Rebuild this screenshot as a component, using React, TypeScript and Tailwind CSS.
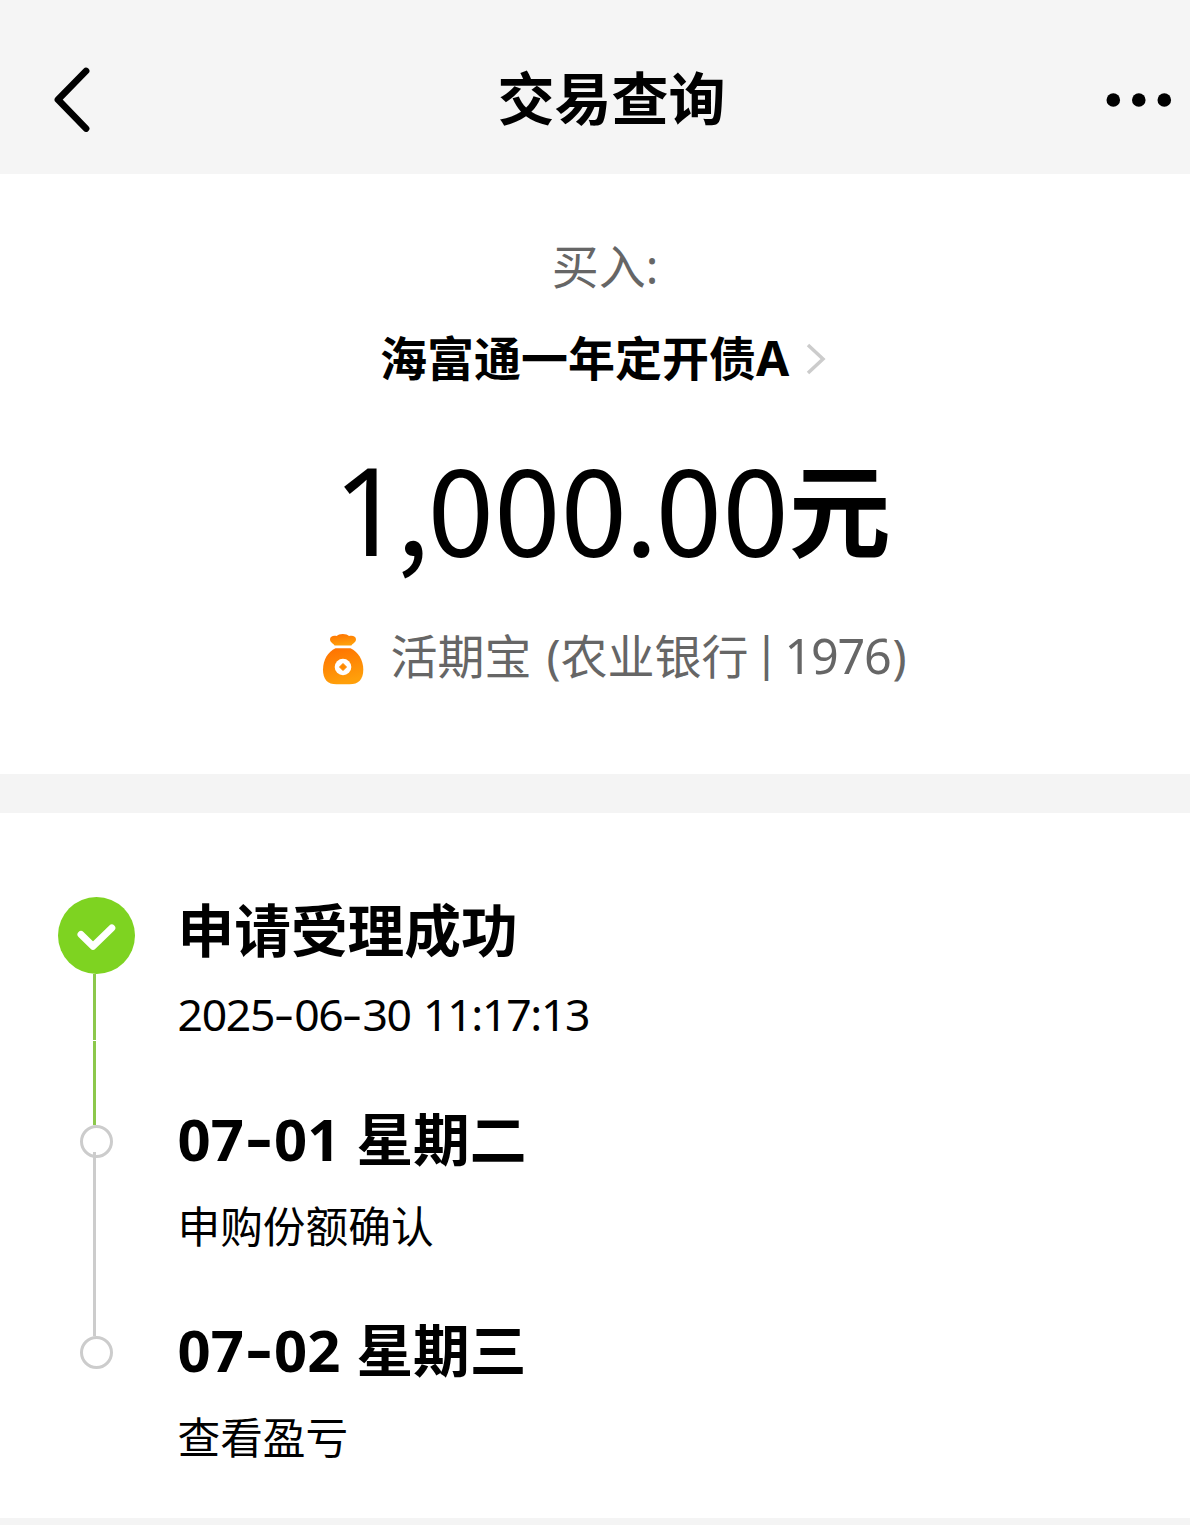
import { clsx } from 'clsx'
import { Fragment, type ReactNode } from 'react'

interface Step {
  date?: string
  title: string
  note?: string
  time?: string
  height: string
}

const STEPS: Step[] = [
  { title: '申请受理成功', time: '2025-06-30 11:17:13', height: 'h-[209px]' },
  { date: '07-01', title: '星期二', note: '申购份额确认', height: 'h-[211px]' },
  { date: '07-02', title: '星期三', note: '查看盈亏', height: 'h-[211px]' },
]

// Latin glyphs sit on the baseline of the surrounding Chinese line
function Latin({ className, children }: { className?: string; children: ReactNode }) {
  return <span className={clsx("font-['Noto_Sans',sans-serif] leading-none", className)}>{children}</span>
}

// Dates use a wider, slightly raised hyphen
function Dashed({ text, dash }: { text: string; dash: string }) {
  return text.split('-').map((part, i) => (
    <Fragment key={i}>
      {i > 0 && <span className={clsx('inline-block -translate-y-[0.03em] scale-x-140 text-center tracking-normal', dash)}>-</span>}
      {part}
    </Fragment>
  ))
}

function BackIcon() {
  return (
    <svg width="36" height="66" viewBox="0 0 36 66" fill="none" className="shrink-0">
      <path d="M32 4L4 32.7L32 61.5" stroke="#000" strokeWidth="6.8" strokeLinecap="round" strokeLinejoin="round" />
    </svg>
  )
}

function MoreIcon() {
  return (
    <svg width="66" height="14" viewBox="0 0 66 14" className="shrink-0">
      <circle cx="7.3" cy="7" r="6.8" />
      <circle cx="32.8" cy="7" r="6.8" />
      <circle cx="58.3" cy="7" r="6.8" />
    </svg>
  )
}

function MoneyBag() {
  return (
    <svg width="42" height="52" viewBox="0 0 42 52" className="mt-[9px] shrink-0">
      <defs>
        <linearGradient id="bag" x1="0" y1="0" x2="0.3" y2="1">
          <stop offset="0" stopColor="#ff6f00" />
          <stop offset="1" stopColor="#ff9f0a" />
        </linearGradient>
      </defs>
      <path
        fill="url(#bag)"
        d="M12.6 12.6C12 10.8 8 9.6 8 6.2C8 3.2 11.5 2 14.8 3C16.5 0.2 25 0.2 27 3C30.5 2 34 3.2 34 6.2C34 9.6 30 10.8 29.4 12.6Z"
      />
      <path
        fill="url(#bag)"
        d="M13.5 15.2H28.5C36 18.5 41.3 27 41.3 36.5C41.3 46.5 36.5 51.3 27.5 51.3H14.5C5.5 51.3 1 46.5 1 36.5C1 27 6 18.5 13.5 15.2Z"
      />
      <circle cx="21" cy="34" r="8.3" fill="#fff" />
      <path d="M21 30.5L24.5 34L21 37.5L17.5 34Z" fill="#ff8a00" stroke="#ff8a00" strokeLinejoin="round" />
    </svg>
  )
}

function CheckBadge() {
  return (
    <svg width="77" height="77" viewBox="0 0 77 77" fill="none" className="shrink-0">
      <circle cx="38.5" cy="38.5" r="38.5" fill="#7ed321" />
      <path d="M23 37.5L35 49.3L53.8 31" stroke="#fff" strokeWidth="7" strokeLinecap="round" strokeLinejoin="round" />
    </svg>
  )
}

function Rail() {
  return (
    <div className="flex w-[77px] shrink-0 flex-col">
      <CheckBadge />
      <div className="ml-[35px] h-[66px] w-[3px] bg-[#8cc84b]" />
      <div className="ml-[35px] mt-px h-[84px] w-[3px] bg-[#8cc84b]" />
      <div className="ml-[22px] size-[33px] rounded-full border-3 border-[#ccc]" />
      <div className="-mt-[6px] ml-[35px] h-[184px] w-[3px] bg-[#ccc]" />
      <div className="ml-[22px] size-[33px] rounded-full border-3 border-[#ccc]" />
    </div>
  )
}

export default function App() {
  return (
    <div className="flex h-[1525px] w-[1190px] flex-col overflow-hidden bg-[#f4f4f4] font-['Noto_Sans_CJK_SC',sans-serif] whitespace-nowrap text-black">
      <header className="flex h-[174px] items-center bg-[#f5f5f5] pt-[26px] pr-[18px] pl-[54px]">
        <BackIcon />
        <h1 className="-mt-[11px] flex-1 pl-[27px] text-center text-[57px] leading-[60px] font-bold">交易查询</h1>
        <MoreIcon />
      </header>

      <section className="flex h-[600px] flex-col items-center bg-white pt-[60px]">
        <p className="pl-[20px] text-[47px] leading-[60px] text-[#666]">
          买入<Latin>:</Latin>
        </p>
        <div className="mt-[32px] flex h-[60px] items-center pl-[16px]">
          <span className="text-[47px] leading-[60px] font-bold">
            海富通一年定开债<Latin className="text-[48px]">A</Latin>
          </span>
          <svg width="20" height="32" viewBox="0 0 20 32" fill="none" className="mt-[6px] ml-[17px]">
            <path d="M2 2L17 16L2 30" stroke="#ccc" strokeWidth="3.5" />
          </svg>
        </div>
        <div className="mt-[48px] flex h-[140px] items-center pl-[34px]">
          <span className="text-[120px] leading-[140px]">
            <Latin className="text-[122px] tracking-[-7px]">1</Latin>
            <span className="-mr-[2px]">,</span>
            000
            <span className="-mx-[2.5px]">.</span>
            00
          </span>
          <span className="pt-[4px] text-[102px] leading-[140px] font-bold">元</span>
        </div>
        <div className="mt-[50px] flex h-[60px] items-center pl-[38px]">
          <MoneyBag />
          <span className="ml-[27px] text-[47px] leading-[60px] text-[#666]">
            活期宝
            <Latin className="ml-[15px]">(</Latin>
            农业银行
            <Latin className="mr-[15px] ml-[5px] inline-block w-[16px] -translate-y-[3px] scale-y-95 text-center">|</Latin>
            <Latin className="text-[48.5px] tracking-[-1.3px]">1976</Latin>
            <Latin className="ml-[2px]">)</Latin>
          </span>
        </div>
      </section>

      <section className="mt-[39px] flex h-[705px] bg-white pt-[84px] pl-[58px]">
        <Rail />
        <ol className="ml-[42.5px]">
          {STEPS.map(step => (
            <li key={step.title} className={step.height}>
              <h2 className="h-[60px] text-[56.7px] leading-[60px] font-bold">
                {step.date && (
                  <Latin className="mr-[16px] text-[58px]">
                    <Dashed text={step.date} dash="w-[0.52em]" />
                  </Latin>
                )}
                {step.title}
              </h2>
              {step.time && (
                <p className="mt-[31px] h-[50px] text-[42.7px] leading-[49px]">
                  <Latin className="text-[44.5px] tracking-[-1.3px] [word-spacing:2px]">
                    <Dashed text={step.time} dash="w-[0.45em]" />
                  </Latin>
                </p>
              )}
              {step.note && <p className="mt-[31px] h-[50px] text-[42.7px] leading-[54px]">{step.note}</p>}
            </li>
          ))}
        </ol>
      </section>
    </div>
  )
}
